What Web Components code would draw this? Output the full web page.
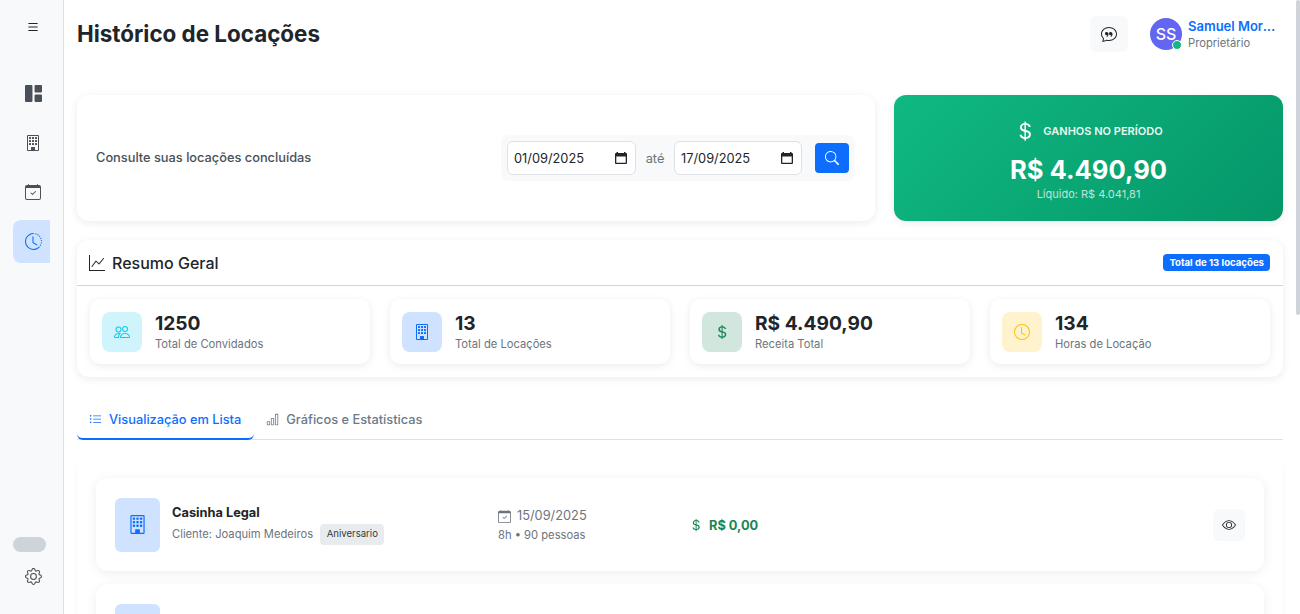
<!DOCTYPE html>
<html lang="pt-BR">
<head>
<meta charset="utf-8">
<title>Histórico de Locações</title>
<style>
  html, body { margin: 0; height: 100%; overflow: hidden; background: #fff; }
  body { font-family: "Inter", "Liberation Sans", sans-serif; color: #212529; }
</style>
</head>
<body>
<app-shell>
  <side-nav slot="nav"></side-nav>
  <top-bar heading="Histórico de Locações" user="Samuel Moreira" role="Proprietário" initials="SS"></top-bar>
  <period-filter></period-filter>
  <summary-panel></summary-panel>
  <view-tabs></view-tabs>
  <rental-list>
    <rental-row name="Casinha Legal" client="Joaquim Medeiros" kind="Aniversario" date="15/09/2025" meta="8h • 90 pessoas" amount="R$ 0,00"></rental-row>
    <rental-row style="--info-shift:2px" name="Salão de Festas" client="Joaquim Medeiros" kind="Aniversario" date="12/09/2025" meta="8h • 90 pessoas" amount="R$ 0,00"></rental-row>
  </rental-list>
</app-shell>

<script>
const ICONS = {
  list: '<path d="M2.5 12a.5.5 0 0 1 .5-.5h10a.5.5 0 0 1 0 1H3a.5.5 0 0 1-.5-.5m0-4a.5.5 0 0 1 .5-.5h10a.5.5 0 0 1 0 1H3a.5.5 0 0 1-.5-.5m0-4a.5.5 0 0 1 .5-.5h10a.5.5 0 0 1 0 1H3a.5.5 0 0 1-.5-.5"/>',
  grid: '<path d="M0 1a1 1 0 0 1 1-1h5a1 1 0 0 1 1 1v14a1 1 0 0 1-1 1H1a1 1 0 0 1-1-1zm9 0a1 1 0 0 1 1-1h5a1 1 0 0 1 1 1v5a1 1 0 0 1-1 1h-5a1 1 0 0 1-1-1zm0 9a1 1 0 0 1 1-1h5a1 1 0 0 1 1 1v5a1 1 0 0 1-1 1h-5a1 1 0 0 1-1-1z"/>',
  building: '<path d="M4 2.5a.5.5 0 0 1 .5-.5h1a.5.5 0 0 1 .5.5v1a.5.5 0 0 1-.5.5h-1a.5.5 0 0 1-.5-.5zm3 0a.5.5 0 0 1 .5-.5h1a.5.5 0 0 1 .5.5v1a.5.5 0 0 1-.5.5h-1a.5.5 0 0 1-.5-.5zm3.5-.5a.5.5 0 0 0-.5.5v1a.5.5 0 0 0 .5.5h1a.5.5 0 0 0 .5-.5v-1a.5.5 0 0 0-.5-.5zM4 5.5a.5.5 0 0 1 .5-.5h1a.5.5 0 0 1 .5.5v1a.5.5 0 0 1-.5.5h-1a.5.5 0 0 1-.5-.5zM7.5 5a.5.5 0 0 0-.5.5v1a.5.5 0 0 0 .5.5h1a.5.5 0 0 0 .5-.5v-1a.5.5 0 0 0-.5-.5zm2.5.5a.5.5 0 0 1 .5-.5h1a.5.5 0 0 1 .5.5v1a.5.5 0 0 1-.5.5h-1a.5.5 0 0 1-.5-.5zM4.5 8a.5.5 0 0 0-.5.5v1a.5.5 0 0 0 .5.5h1a.5.5 0 0 0 .5-.5v-1a.5.5 0 0 0-.5-.5zm2.5.5a.5.5 0 0 1 .5-.5h1a.5.5 0 0 1 .5.5v1a.5.5 0 0 1-.5.5h-1a.5.5 0 0 1-.5-.5zm3.5-.5a.5.5 0 0 0-.5.5v1a.5.5 0 0 0 .5.5h1a.5.5 0 0 0 .5-.5v-1a.5.5 0 0 0-.5-.5z"/><path d="M2 1a1 1 0 0 1 1-1h10a1 1 0 0 1 1 1v14a1 1 0 0 1-1 1H3a1 1 0 0 1-1-1zm11 0H3v14h3v-2.5a.5.5 0 0 1 .5-.5h3a.5.5 0 0 1 .5.5V15h3z"/>',
  calendarCheck: '<path d="M10.854 7.146a.5.5 0 0 1 0 .708l-3 3a.5.5 0 0 1-.708 0l-1.5-1.5a.5.5 0 1 1 .708-.708L7.5 9.793l2.646-2.647a.5.5 0 0 1 .708 0"/><path d="M3.5 0a.5.5 0 0 1 .5.5V1h8V.5a.5.5 0 0 1 1 0V1h1a2 2 0 0 1 2 2v11a2 2 0 0 1-2 2H2a2 2 0 0 1-2-2V3a2 2 0 0 1 2-2h1V.5a.5.5 0 0 1 .5-.5M1 4v10a1 1 0 0 0 1 1h12a1 1 0 0 0 1-1V4z"/>',
  clockHistory: '<path d="M8.515 1.019A7 7 0 0 0 8 1V0a8 8 0 0 1 .589.022zm2.004.45a7 7 0 0 0-.985-.299l.219-.976q.576.129 1.126.342zm1.37.71a7 7 0 0 0-.439-.27l.493-.87a8 8 0 0 1 .979.654l-.615.789a7 7 0 0 0-.418-.302zm1.834 1.79a7 7 0 0 0-.653-.796l.724-.69q.406.429.747.91zm.744 1.352a7 7 0 0 0-.214-.468l.893-.45a8 8 0 0 1 .45 1.088l-.95.313a7 7 0 0 0-.179-.483m.53 2.507a7 7 0 0 0-.1-1.025l.985-.17q.1.58.116 1.17zm-.131 1.538q.05-.254.081-.51l.993.123a8 8 0 0 1-.23 1.155l-.964-.267q.069-.247.12-.501m-.952 2.379q.276-.436.486-.908l.914.405q-.24.54-.555 1.038zm-.964 1.205q.183-.183.35-.378l.758.653a8 8 0 0 1-.401.432z"/><path d="M8 1a7 7 0 1 0 4.95 11.95l.707.707A8.001 8.001 0 1 1 8 0z"/><path d="M7.5 3a.5.5 0 0 1 .5.5v5.21l3.248 1.856a.5.5 0 0 1-.496.868l-3.5-2A.5.5 0 0 1 7 9V3.5a.5.5 0 0 1 .5-.5"/>',
  gear: '<path d="M8 4.754a3.246 3.246 0 1 0 0 6.492 3.246 3.246 0 0 0 0-6.492M5.754 8a2.246 2.246 0 1 1 4.492 0 2.246 2.246 0 0 1-4.492 0"/><path d="M9.796 1.343c-.527-1.79-3.065-1.79-3.592 0l-.094.319a.873.873 0 0 1-1.255.52l-.292-.16c-1.64-.892-3.433.902-2.54 2.541l.159.292a.873.873 0 0 1-.52 1.255l-.319.094c-1.79.527-1.79 3.065 0 3.592l.319.094a.873.873 0 0 1 .52 1.255l-.16.292c-.892 1.64.901 3.434 2.541 2.54l.292-.159a.873.873 0 0 1 1.255.52l.094.319c.527 1.79 3.065 1.79 3.592 0l.094-.319a.873.873 0 0 1 1.255-.52l.292.16c1.64.893 3.434-.902 2.54-2.541l-.159-.292a.873.873 0 0 1 .52-1.255l.319-.094c1.79-.527 1.79-3.065 0-3.592l-.319-.094a.873.873 0 0 1-.52-1.255l.16-.292c.893-1.64-.902-3.433-2.541-2.54l-.292.159a.873.873 0 0 1-1.255-.52zm-2.633.283c.246-.835 1.428-.835 1.674 0l.094.319a1.873 1.873 0 0 0 2.693 1.115l.291-.16c.764-.415 1.6.42 1.184 1.185l-.159.292a1.873 1.873 0 0 0 1.116 2.692l.318.094c.835.246.835 1.428 0 1.674l-.319.094a1.873 1.873 0 0 0-1.115 2.693l.16.291c.415.764-.42 1.6-1.185 1.184l-.291-.159a1.873 1.873 0 0 0-2.693 1.116l-.094.318c-.246.835-1.428.835-1.674 0l-.094-.319a1.873 1.873 0 0 0-2.692-1.115l-.292.16c-.764.415-1.6-.42-1.184-1.185l.159-.291A1.873 1.873 0 0 0 1.945 8.93l-.319-.094c-.835-.246-.835-1.428 0-1.674l.319-.094A1.873 1.873 0 0 0 3.06 4.377l-.16-.292c-.415-.764.42-1.6 1.185-1.184l.292.159a1.873 1.873 0 0 0 2.692-1.115z"/>',
  chatQuote: '<path d="M2.678 11.894a1 1 0 0 1 .287.801 11 11 0 0 1-.398 2c1.395-.323 2.247-.697 2.634-.893a1 1 0 0 1 .71-.074A8 8 0 0 0 8 14c3.996 0 7-2.807 7-6s-3.004-6-7-6-7 2.808-7 6c0 1.468.617 2.83 1.678 3.894m-.493 3.905a22 22 0 0 1-.713.129c-.2.032-.352-.176-.273-.362a10 10 0 0 0 .244-.637l.003-.01c.248-.72.45-1.548.524-2.319C.743 11.37 0 9.76 0 8c0-3.866 3.582-7 8-7s8 3.134 8 7-3.582 7-8 7a9 9 0 0 1-2.347-.306c-.52.263-1.639.742-3.468 1.105"/><path d="M7.066 6.76A1.665 1.665 0 0 0 4 7.668a1.667 1.667 0 0 0 2.561 1.406c-.131.389-.375.804-.777 1.22a.417.417 0 0 0 .6.58c1.486-1.54 1.293-3.214.682-4.112zm4 0A1.665 1.665 0 0 0 8 7.668a1.667 1.667 0 0 0 2.561 1.406c-.131.389-.375.804-.777 1.22a.417.417 0 0 0 .6.58c1.486-1.54 1.293-3.214.682-4.112z"/>',
  search: '<path d="M11.742 10.344a6.5 6.5 0 1 0-1.397 1.398h-.001q.044.06.098.115l3.85 3.85a1 1 0 0 0 1.415-1.414l-3.85-3.85a1 1 0 0 0-.115-.1zM12 6.5a5.5 5.5 0 1 1-11 0 5.5 5.5 0 0 1 11 0"/>',
  dollar: '<path d="M4 10.781c.148 1.667 1.513 2.85 3.591 3.003V15h1.043v-1.216c2.27-.179 3.678-1.438 3.678-3.3 0-1.59-.947-2.51-2.956-3.028l-.722-.187V3.467c1.122.11 1.879.714 2.07 1.616h1.47c-.166-1.6-1.54-2.748-3.54-2.875V1H7.591v1.233c-1.939.23-3.27 1.472-3.27 3.156 0 1.454.966 2.483 2.661 2.917l.61.162v4.031c-1.149-.17-1.94-.8-2.131-1.718zm3.391-3.836c-1.043-.263-1.6-.825-1.6-1.616 0-.944.704-1.641 1.8-1.828v3.495l-.2-.05zm1.591 1.872c1.287.323 1.852.859 1.852 1.769 0 1.097-.826 1.828-2.2 1.939V8.73z"/>',
  graphUp: '<path fill-rule="evenodd" d="M0 0h1v15h15v1H0zm14.817 3.113a.5.5 0 0 1 .07.704l-4.5 5.5a.5.5 0 0 1-.74.037L7.06 6.767l-3.656 5.027a.5.5 0 0 1-.808-.588l4-5.5a.5.5 0 0 1 .758-.06l2.609 2.61 4.15-5.073a.5.5 0 0 1 .704-.07"/>',
  people: '<path d="M15 14s1 0 1-1-1-4-5-4-5 3-5 4 1 1 1 1zm-7.978-1L7 12.996c.001-.264.167-1.03.76-1.72C8.312 10.629 9.282 10 11 10c1.717 0 2.687.63 3.24 1.276.593.69.758 1.457.76 1.72l-.008.002-.014.002zM11 7a2 2 0 1 0 0-4 2 2 0 0 0 0 4m3-2a3 3 0 1 1-6 0 3 3 0 0 1 6 0M6.936 9.28a6 6 0 0 0-1.23-.247A7 7 0 0 0 5 9c-4 0-5 3-5 4q0 1 1 1h4.216A2.24 2.24 0 0 1 5 13c0-1.01.377-2.042 1.09-2.904.243-.294.526-.569.846-.816M4.92 10A5.5 5.5 0 0 0 4 13H1c0-.26.164-1.03.76-1.724.545-.636 1.492-1.256 3.16-1.275ZM1.5 5.5a3 3 0 1 1 6 0 3 3 0 0 1-6 0m3-2a2 2 0 1 0 0 4 2 2 0 0 0 0-4"/>',
  clock: '<path d="M8 3.5a.5.5 0 0 0-1 0V9a.5.5 0 0 0 .252.434l3.5 2a.5.5 0 0 0 .496-.868L8 8.71z"/><path d="M8 16A8 8 0 1 0 8 0a8 8 0 0 0 0 16m7-8A7 7 0 1 1 1 8a7 7 0 0 1 14 0"/>',
  listUl: '<path d="M5 11.5a.5.5 0 0 1 .5-.5h9a.5.5 0 0 1 0 1h-9a.5.5 0 0 1-.5-.5m0-4a.5.5 0 0 1 .5-.5h9a.5.5 0 0 1 0 1h-9a.5.5 0 0 1-.5-.5m0-4a.5.5 0 0 1 .5-.5h9a.5.5 0 0 1 0 1h-9a.5.5 0 0 1-.5-.5m-3 1a1 1 0 1 0 0-2 1 1 0 0 0 0 2m0 4a1 1 0 1 0 0-2 1 1 0 0 0 0 2m0 4a1 1 0 1 0 0-2 1 1 0 0 0 0 2"/>',
  barChart: '<path d="M4 11H2v3h2zm5-4H7v7h2zm5-5v12h-2V2zm-2-1a1 1 0 0 0-1 1v12a1 1 0 0 0 1 1h2a1 1 0 0 0 1-1V2a1 1 0 0 0-1-1zM6 7a1 1 0 0 1 1-1h2a1 1 0 0 1 1 1v7a1 1 0 0 1-1 1H7a1 1 0 0 1-1-1zm-5 4a1 1 0 0 1 1-1h2a1 1 0 0 1 1 1v3a1 1 0 0 1-1 1H2a1 1 0 0 1-1-1z"/>',
  eye: '<path d="M16 8s-3-5.5-8-5.5S0 8 0 8s3 5.5 8 5.5S16 8 16 8M1.173 8a13 13 0 0 1 1.66-2.043C4.12 4.668 5.88 3.5 8 3.5s3.879 1.168 5.168 2.457A13 13 0 0 1 14.828 8q-.086.13-.195.288c-.335.48-.83 1.12-1.465 1.755C11.879 11.332 10.119 12.5 8 12.5s-3.879-1.168-5.168-2.457A13 13 0 0 1 1.172 8z"/><path d="M8 5.5a2.5 2.5 0 1 0 0 5 2.5 2.5 0 0 0 0-5M4.5 8a3.5 3.5 0 1 1 7 0 3.5 3.5 0 0 1-7 0"/>'
};

function icon(name, size) {
  return `<svg xmlns="http://www.w3.org/2000/svg" width="${size}" height="${size}" viewBox="0 0 16 16" fill="currentColor" style="display:block;flex:none">${ICONS[name]}</svg>`;
}

// small helper, every element below only differs by its template
class Base extends HTMLElement {
  constructor() {
    super();
    this.attachShadow({ mode: "open" });
  }
  connectedCallback() {
    this.shadowRoot.innerHTML = this.render();
  }
  attr(name) {
    return this.getAttribute(name) || "";
  }
}

class AppShell extends Base {
  render() {
    return `
      <style>
        :host { display: flex; height: 100vh; position: relative; }
        .main {
          flex: 1; min-width: 0; overflow: hidden;
          display: flex; flex-direction: column; padding: 0 17px 0 13px;
        }
        /* headless chrome hides real scrollbars in the photo, so the thumb lies over the page */
        .thumb { position: absolute; top: 0; right: 0; width: 4px; height: 315px; background: #ced4da; border-radius: 2px; }
      </style>
      <slot name="nav"></slot>
      <div class="main"><slot></slot></div>
      <div class="thumb"></div>
    `;
  }
}

class SideNav extends Base {
  render() {
    return `
      <style>
        :host {
          display: flex; flex-direction: column; flex: none;
          width: 64px; box-sizing: border-box; height: 100%;
          background: #f8f9fa; border-right: 1px solid #dee2e6; color: #495057;
        }
        .toggle { height: 54px; padding-left: 3px; display: flex; align-items: center; justify-content: center; color: #212529; }
        .items { display: flex; flex-direction: column; gap: 6.5px; margin-top: 17.5px; }
        .item { height: 43px; margin-left: 13px; width: 37px; padding-left: 3px; box-sizing: border-box; display: flex; align-items: center; justify-content: center; border-radius: 8px 0 0 8px; }
        .item.active { background: #cfe2ff; color: #0d6efd; }
        .spacer { flex: 1; }
        .pill { width: 33px; height: 15px; margin-left: 13px; border-radius: 8px; background: #ced4da; }
        .gear { height: 46px; margin-top: 1px; margin-bottom: 15px; padding-left: 3px; display: flex; align-items: center; justify-content: center; }
      </style>
      <div class="toggle">${icon("list", 14)}</div>
      <div class="items">
        <div class="item">${icon("grid", 17)}</div>
        <div class="item">${icon("building", 16)}</div>
        <div class="item">${icon("calendarCheck", 16)}</div>
        <div class="item active">${icon("clockHistory", 17)}</div>
      </div>
      <div class="spacer"></div>
      <div class="pill"></div>
      <div class="gear">${icon("gear", 17)}</div>
    `;
  }
}

class TopBar extends Base {
  render() {
    return `
      <style>
        :host { display: flex; align-items: center; flex: none; height: 67px; }
        h1 { margin: 0; font-size: 22.4px; font-weight: 700; color: #212529; flex: 1; }
        .chat { width: 38px; height: 36px; background: #f8f9fa; border-radius: 6px; display: flex; align-items: center; justify-content: center; color: #212529; margin-right: 22px; }
        .avatar { position: relative; width: 32px; height: 32px; border-radius: 50%; background: #6366f1; color: #fff; font-size: 16px; font-weight: 500; display: flex; align-items: center; justify-content: center; margin-right: 6px; }
        .dot { position: absolute; right: 0; bottom: 0; width: 8px; height: 8px; border-radius: 50%; background: #10b981; border: 1px solid #fff; }
        .who { width: 95px; }
        .name { font-size: 13px; font-weight: 600; color: #0d6efd; line-height: 16px; margin-top: 1px; white-space: nowrap; overflow: hidden; text-overflow: ellipsis; width: 90px; }
        .role { font-size: 11.2px; color: #6c757d; line-height: 16px; margin-top: 1px; }
      </style>
      <h1>${this.attr("heading")}</h1>
      <div class="chat">${icon("chatQuote", 16)}</div>
      <div class="avatar">${this.attr("initials")}<span class="dot"></span></div>
      <div class="who">
        <div class="name">${this.attr("user")}</div>
        <div class="role">${this.attr("role")}</div>
      </div>
    `;
  }
}

const dateField = (value) => `
  <div class="field"><span>${value}</span>
    <svg width="14" height="14" viewBox="0 0 14 14"><path fill="#212529" d="M2.5 1h1.5v1h6V1h1.5v1h.5a1 1 0 0 1 1 1v9a1 1 0 0 1-1 1H2a1 1 0 0 1-1-1V3a1 1 0 0 1 1-1h.5zM2.3 5.5v6.2h9.4V5.5z"/></svg>
  </div>`;

class PeriodFilter extends Base {
  render() {
    return `
      <style>
        :host { display: grid; grid-template-columns: 798px 389px; gap: 19px; margin-top: 28px; flex: none; height: 126px; }
        .card { background: #fff; border-radius: 12px; box-shadow: 0 2px 8px rgba(0,0,0,.08); display: flex; align-items: center; justify-content: space-between; padding: 0 20px 0 19px; }
        .label { font-size: 12.8px; font-weight: 500; color: #495057; margin-top: -2px; }
        .range { display: flex; align-items: center; background: #f8f9fa; border-radius: 8px; padding: 6px; height: 34px; }
        .field { width: 129px; height: 34px; box-sizing: border-box; border: 1px solid #dee2e6; border-radius: 6px; background: #fff; display: flex; align-items: center; justify-content: space-between; padding: 0 7px 0 6px; font-size: 12.8px; color: #212529; }
        .field + .until + .field { width: 128px; }
        .until { font-size: 12.8px; color: #6c757d; width: 38px; text-align: center; }
        button { all: unset; width: 34px; height: 30px; margin-left: 13px; border-radius: 4px; background: #0d6efd; color: #fff; display: flex; align-items: center; justify-content: center; }
        .earn { border-radius: 12px; background: linear-gradient(135deg, #10b981, #059669); color: #fff; display: flex; flex-direction: column; align-items: center; justify-content: center; padding-top: 3px; box-sizing: border-box; box-shadow: 0 2px 8px rgba(0,0,0,.08); }
        .earn-head { display: flex; align-items: center; gap: 7px; font-size: 11px; font-weight: 600; height: 24px; }
        .earn-head span { opacity: .92; }
        .value { font-size: 25.6px; font-weight: 700; line-height: 32px; margin-top: 11px; }
        .net { font-size: 11px; line-height: 14px; opacity: .72; margin-top: 1px; }
      </style>
      <div class="card">
        <div class="label">Consulte suas locações concluídas</div>
        <div class="range">
          ${dateField("01/09/2025")}
          <span class="until">até</span>
          ${dateField("17/09/2025")}
          <button>${icon("search", 14)}</button>
        </div>
      </div>
      <div class="earn">
        <div class="earn-head">${icon("dollar", 22)}<span>GANHOS NO PERÍODO</span></div>
        <div class="value">R$ 4.490,90</div>
        <div class="net">Líquido: R$ 4.041,81</div>
      </div>
    `;
  }
}

const stat = (name, bg, fg, value, label) => `
  <div class="stat">
    <div class="tile" style="background:${bg};color:${fg}">${icon(name, 16)}</div>
    <div class="txt">
      <div class="num">${value}</div>
      <div class="lbl">${label}</div>
    </div>
  </div>`;

class SummaryPanel extends Base {
  render() {
    return `
      <style>
        :host { display: block; flex: none; margin-top: 19px; background: #fff; border-radius: 12px; box-shadow: 0 2px 8px rgba(0,0,0,.08); }
        header { display: flex; align-items: center; justify-content: space-between; height: 45px; border-bottom: 1px solid #d3d4d5; padding: 0 13px 0 12px; }
        .ttl { display: flex; align-items: center; gap: 7px; font-size: 16px; font-weight: 500; color: #212529; }
        .badge { background: #0d6efd; color: #fff; font-size: 9.6px; font-weight: 700; padding: 0 6px; height: 17px; line-height: 17px; border-radius: 4px; }
        .grid { display: grid; grid-template-columns: repeat(4, 280px); gap: 20px; padding: 13px; }
        .stat { display: flex; align-items: center; gap: 13px; height: 65px; padding: 0 12px; box-sizing: border-box; background: #fff; border-radius: 10px; box-shadow: 0 2px 8px rgba(0,0,0,.08); }
        .tile { width: 40px; height: 40px; border-radius: 8px; display: flex; align-items: center; justify-content: center; flex: none; }
        .txt { margin-top: -1px; }
        .num { font-size: 19.2px; font-weight: 700; line-height: 23px; color: #212529; }
        .lbl { font-size: 11.2px; line-height: 14px; color: #6c757d; margin-top: 2px; }
      </style>
      <header>
        <div class="ttl">${icon("graphUp", 16)}Resumo Geral</div>
        <div class="badge">Total de 13 locações</div>
      </header>
      <div class="grid">
        ${stat("people", "#cff4fc", "#0dcaf0", "1250", "Total de Convidados")}
        ${stat("building", "#cfe2ff", "#0d6efd", "13", "Total de Locações")}
        ${stat("dollar", "#d1e7dd", "#198754", "R$ 4.490,90", "Receita Total")}
        ${stat("clock", "#fff3cd", "#ffc107", "134", "Horas de Locação")}
      </div>
    `;
  }
}

class ViewTabs extends Base {
  render() {
    return `
      <style>
        :host { display: flex; flex: none; margin-top: 21px; height: 42px; box-sizing: border-box; border-bottom: 1px solid #dee2e6; }
        .tab { display: flex; align-items: center; gap: 7px; padding: 0 13px 0 12px; font-size: 12.8px; font-weight: 500; color: #6c7a89; height: 42px; box-sizing: border-box; }
        .tab.on { color: #0d6efd; border-bottom: 2px solid #0d6efd; border-radius: 0 0 6px 6px; padding-top: 2px; }
      </style>
      <div class="tab on">${icon("listUl", 13)}Visualização em Lista</div>
      <div class="tab">${icon("barChart", 13)}Gráficos e Estatísticas</div>
    `;
  }
}

class RentalList extends Base {
  render() {
    return `
      <style>
        :host { display: flex; flex-direction: column; gap: 13px; flex: none; margin-top: 19px; padding: 19px 19px 0; box-sizing: border-box; background: #fff; border-radius: 12px; box-shadow: 0 1px 4px rgba(0,0,0,.04); }
      </style>
      <slot></slot>
    `;
  }
}

class RentalRow extends Base {
  render() {
    return `
      <style>
        :host { display: flex; align-items: center; flex: none; height: 93px; box-sizing: border-box; padding: 0 19px; background: #fff; border-radius: 12px; box-shadow: 0 2px 12px rgba(0,0,0,.07); }
        .tile { width: 45px; height: 54px; border-radius: 6px; background: #cfe2ff; color: #0d6efd; display: flex; align-items: center; justify-content: center; flex: none; margin-right: 12px; }
        .info { width: 326px; flex: none; margin-top: var(--info-shift, -2px); }
        .name { font-size: 12.8px; font-weight: 700; color: #212529; line-height: 18px; }
        .sub { display: flex; align-items: center; gap: 7px; font-size: 11.2px; color: #6c757d; margin-top: 2px; margin-bottom: -1px; }
        .kind { background: #e9ecef; color: #343a40; border-radius: 4px; font-size: 9.6px; padding: 0 6.5px; height: 21px; line-height: 20px; }
        .when { width: 192px; flex: none; }
        .date { display: flex; align-items: center; gap: 6px; font-size: 12.8px; color: #6c757d; line-height: 18px; }
        .meta { font-size: 11.2px; color: #6c757d; line-height: 14px; margin-top: 3px; }
        .money { display: flex; align-items: center; gap: 6px; color: #198754; font-size: 12.8px; font-weight: 700; flex: 1; margin-top: 1px; margin-left: -1px; }
        .view { width: 32px; height: 32px; border-radius: 6px; background: #f8f9fa; display: flex; align-items: center; justify-content: center; color: #212529; }
      </style>
      <div class="tile">${icon("building", 19)}</div>
      <div class="info">
        <div class="name">${this.attr("name")}</div>
        <div class="sub"><span>Cliente: ${this.attr("client")}</span><span class="kind">${this.attr("kind")}</span></div>
      </div>
      <div class="when">
        <div class="date">${icon("calendarCheck", 13)}${this.attr("date")}</div>
        <div class="meta">${this.attr("meta")}</div>
      </div>
      <div class="money">${icon("dollar", 14)}<span>${this.attr("amount")}</span></div>
      <div class="view">${icon("eye", 14)}</div>
    `;
  }
}

customElements.define("app-shell", AppShell);
customElements.define("side-nav", SideNav);
customElements.define("top-bar", TopBar);
customElements.define("period-filter", PeriodFilter);
customElements.define("summary-panel", SummaryPanel);
customElements.define("view-tabs", ViewTabs);
customElements.define("rental-list", RentalList);
customElements.define("rental-row", RentalRow);
</script>
</body>
</html>
